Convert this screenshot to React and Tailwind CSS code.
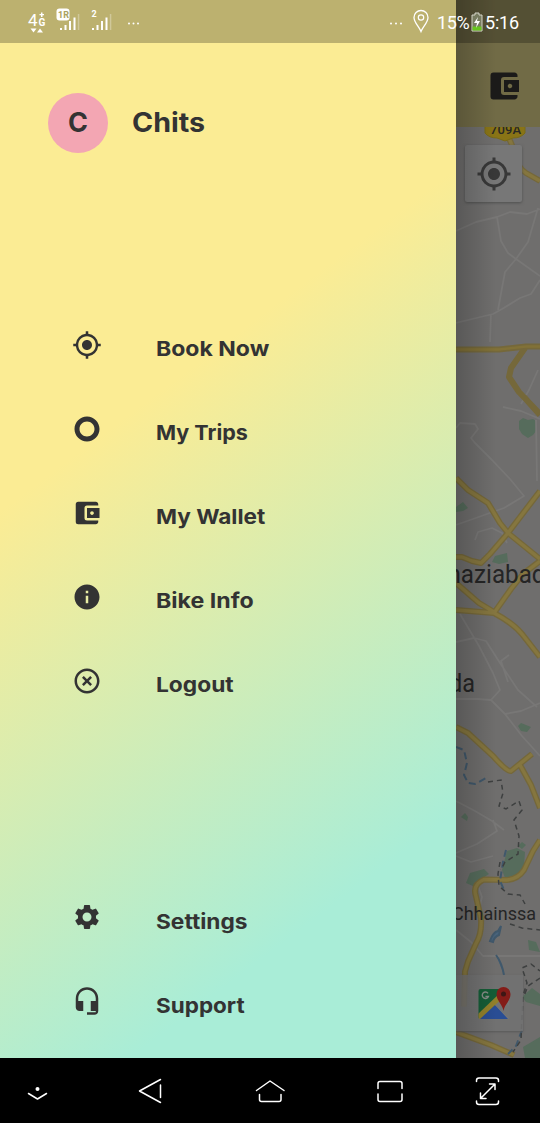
import {
  MdAccountBalanceWallet,
  MdHeadsetMic,
  MdHighlightOff,
  MdInfo,
  MdMyLocation,
  MdSettings,
  MdTripOrigin,
} from "react-icons/md";

const mainItems = [
  { Icon: MdMyLocation, label: "Book Now", fit: "pt-[7px] scale-x-[1.123]" },
  { Icon: MdTripOrigin, label: "My Trips", fit: "pt-[7px] scale-x-[1.05]" },
  { Icon: MdAccountBalanceWallet, label: "My Wallet", fit: "pt-[7px] scale-x-[1.1]" },
  { Icon: MdInfo, label: "Bike Info", fit: "pt-[7px] scale-x-[1.13]" },
  { Icon: MdHighlightOff, label: "Logout", fit: "pt-[7px] scale-x-[1.11]" },
];

const footerItems = [
  { Icon: MdSettings, label: "Settings", fit: "pt-[9px] scale-x-[1.107]" },
  { Icon: MdHeadsetMic, label: "Support", fit: "pt-[9px] scale-x-[1.097]" },
];

function MenuRow({ Icon, label, fit }) {
  return (
    <li className="flex h-[84px] items-center pl-[72px]">
      <Icon className="size-[30px] shrink-0" />
      <span className={`ml-[54px] origin-left text-[20.5px] leading-6 font-bold whitespace-nowrap ${fit}`}>
        {label}
      </span>
    </li>
  );
}

function Drawer() {
  return (
    <aside className="flex w-[456px] shrink-0 flex-col bg-[linear-gradient(143deg,#fbec94_36.5%,#a9edd7_82.5%)] font-['Inter',sans-serif] text-[#333333]">
      <header className="flex items-center pt-[93px] pl-12">
        <div className="flex size-[60px] items-center justify-center rounded-full bg-[#f3a6b3] text-[27px] font-bold">
          C
        </div>
        <h1 className="ml-6 origin-left scale-x-[1.06] text-[27px] leading-8 font-bold">Chits</h1>
      </header>
      <ul className="mt-[150px]">
        {mainItems.map((item) => (
          <MenuRow key={item.label} {...item} />
        ))}
      </ul>
      <ul className="mt-[152px]">
        {footerItems.map((item) => (
          <MenuRow key={item.label} {...item} />
        ))}
      </ul>
    </aside>
  );
}

function MapDrawing() {
  return (
    <svg viewBox="456 127 84 931" className="block h-[931px] w-[84px] font-['Roboto',sans-serif]" fill="none">
      <rect x="456" y="127" width="84" height="931" fill="#6f6e6d" />
      <g fill="#566c5c">
        <path d="M519 421l4-3 5 2 5-1 3 2v10l-3 4-5 3-6-4-3-5z" />
        <path d="M456 507l7-5 5 6-5 3-7 1zM495 556l12-3 1 9-9 2-7-2z" />
        <path d="M518 726l3-3 10 4-4 5-6-1z" />
        <path d="M502 870l5-19 10-3 8 4-1 14-7 10-12 2zM466 883l4-10 14-4 5 5-11 7-5 5zM518 846l4-4 4 3-4 4z" />
        <path d="M522 997l10-9 8 6v12l-14-4zM528 940l8 2 4 10-11-2z" />
        <path d="M461 817l4-4 3 4-1 4zM523 1047l17-10v21h-15z" />
      </g>
      <g stroke="#787776" strokeWidth="1.8" strokeLinejoin="round">
        <path d="M456 231l20-9 21-5 13-5 17 2 13-5M497 217l4 24 7 12 8 6 24 17M538 208l-10 34-12 17-11 13-3 16-4 22 M540 280l-9 14-11 4-18 11-9 5-37 9M491 314l-1 28M538 370l-9 20-8 14M503 407l18 4 19 8" />
        <path d="M456 428l4-5 15 1 3 5-7 9 4 5 17 17 18 19 14 17-20 12-31 11-17 6M536 420l1 61M475 540l3-8 14-4 10 5 5 10" />
        <path d="M460 614l19 32 14 27 7 17-9 10-14-1h-21M456 642l18-4 12 3 14 22 18 27 19 17M491 700l14 14 17 22 18 20M505 714l16-3 19-8M509 655l-8 6 7 21" />
        <path d="M456 801l19 10 17 10 12 9M493 820l4 11-20 13-21 9M456 856l15 6 22-6M456 930l15 12 12 14 57 0M478 914l4-17-5-14" />
      </g>
      <g stroke="#75683a" strokeWidth="6" strokeLinejoin="round">
        <path d="M508 137q5 8 6 17 4 14 12 19l14 8" />
        <path d="M456 349.500h43l27-3h14M525 348l-14 20-2 9 10 15 21 22M524 397l16 18" />
        <path d="M456 478l12 12 20 13 12 20 8 10 32 26M540 491l-32 42-18 21-9 9-9-2-10-4h-6M456 583l23 20 15 9M456 610l38 3 17-24 12-15 17-13M494 613q19 10 28 21l18 23" />
        <path d="M456 727l12 6 25 23q14 16 18 15l21-17M520 765l11 20 9 23" />
        <path d="M540 840l-7 11-9 19q-6 9-17 10l-23-.500q-12 5-8 17l5 22q1 15-5 25l-8 18-3 10-1 35M456 1032l35 13 23 10" />
      </g>
      <g stroke="#85763f" strokeWidth="3.4" strokeLinejoin="round">
        <path d="M508 137q5 8 6 17 4 14 12 19l14 8" />
        <path d="M456 478l12 12 20 13 12 20 8 10 32 26M540 491l-32 42-18 21-9 9-9-2-10-4h-6M456 583l23 20 15 9M456 610l38 3 17-24 12-15 17-13M494 613q19 10 28 21l18 23" />
        <path d="M456 727l12 6 25 23q14 16 18 15l21-17M520 765l11 20 9 23" />
        <path d="M540 840l-7 11-9 19q-6 9-17 10l-23-.500q-12 5-8 17l5 22q1 15-5 25l-8 18-3 10-1 35M456 1032l35 13 23 10" />
      </g>
      <path d="M456 349.500h43l27-3h14" stroke="#817138" strokeWidth="2.400" />
      <g stroke="#40586b">
        <path d="M490 941q3-9 8-10l3-5-2 9q-5 2-6 7zM496 955q6 8 8 20" fill="#48637b" strokeWidth="2" />
        <path d="M456 747l8 3 3 13-3 12 4 8 7 1 13-7M506 850l-3 12-3 19 5 11M522 1030l-6 16-8 8" strokeWidth="2" strokeDasharray="7 4" />
      </g>
      <g stroke="#3e4040" strokeWidth="1.500" strokeDasharray="5 4">
        <path d="M488 782l13-2 2 13-4 13 7 3 13-8 3 9-8 10 5 16-1 18-13 8-4 8M500 862l-2 12 1 12 9 8 12 1 5 9M510 924l12 4 18 2M522 1020l1-25 4-12-5-15 9-4 9 7M540 978l-12 8-4 10M522 1015l-1 25-8 12" />
      </g>
      <path d="M485 126h40v7q-4 5-12 5l-8 3-8-3q-8 0-12-5z" fill="#897416" stroke="#796a18" />
      <text x="490" y="134" textLength="31" fill="#292925" fontSize="13" fontWeight="500">709A</text>
      <g fill="#252525">
        <text x="447.500" y="583" textLength="98" lengthAdjust="spacingAndGlyphs" fontSize="25">haziabad</text>
        <text x="449" y="692" textLength="26" lengthAdjust="spacingAndGlyphs" fontSize="25">da</text>
        <text x="452" y="920" textLength="84" lengthAdjust="spacingAndGlyphs" fontSize="19">Chhainssa</text>
      </g>
    </svg>
  );
}

function GoogleMapsMark() {
  return (
    <svg viewBox="478 986 34 34" className="size-[34px]">
      <defs>
        <clipPath id="tile"><rect x="478.500" y="989" width="31" height="30" rx="2" /></clipPath>
      </defs>
      <g clipPath="url(#tile)">
        <path d="M478 988h32v32h-32z" fill="#777" />
        <path d="M478 988h28v9l-28 22z" fill="#155c36" />
        <path d="M478 1014l22-21 5 5-24 22h-3z" fill="#91802b" />
        <path d="M480 1019l15-14 13 14z" fill="#294d94" />
        <path d="M495 1005l8-7 7 10v11z" fill="#737373" />
      </g>
      <path d="M488 993.300a3.200 3.200 0 1 0 .4 3.200h-3" fill="none" stroke="#858c87" strokeWidth="1.400" />
      <path d="M503.500 1011c-1-7-7-10-7-17a7 7 0 0 1 14 0c0 7-6 10-7 17z" fill="#841c18" />
      <circle cx="503.500" cy="994" r="2.500" fill="#3d1715" />
    </svg>
  );
}

function DimmedPage() {
  return (
    <section className="relative flex w-[84px] flex-col overflow-hidden bg-[#6f6e6d]">
      <header className="flex h-[127px] shrink-0 items-end bg-[#716b46] pb-[23.500px] pl-[29.500px]">
        <MdAccountBalanceWallet className="size-9 shrink-0 text-[#1b1a19]" />
      </header>
      <MapDrawing />
      <div className="absolute top-[145px] left-[9px] flex size-[57px] items-center justify-center rounded-[2px] bg-[#777777] shadow-[0_1px_3px_#505050]">
        <MdMyLocation className="size-9 text-[#383838]" />
      </div>
      <div className="absolute top-[975px] left-0 flex h-[56px] w-[67px] items-center bg-[#727272]/85 pl-[22px] shadow-[0_1px_2px_#585858]">
        <GoogleMapsMark />
      </div>
      <div className="absolute inset-y-0 left-0 w-10 bg-gradient-to-r from-black/20 to-transparent" />
    </section>
  );
}

function SignalBars() {
  return (
    <>
      <path d="M0 17h2v2H0z M4.500 14h2v5h-2z M9 10h2v9H9z M13.500 6.500h2V19h-2z" />
      <path d="M17.800 3h1.500v16h-1.500z" opacity=".3" />
    </>
  );
}

function StatusBar() {
  return (
    <div className="absolute inset-x-0 top-0 flex h-[43px] items-center bg-black/25 font-['Roboto',sans-serif] text-white">
      <svg viewBox="0 0 150 43" className="h-[43px] w-[150px] shrink-0" fill="white">
        <text x="28" y="26" fontSize="17" textLength="9">4</text>
        <text x="38.500" y="26" fontSize="10" fontWeight="700">G</text>
        <path d="M41 12.500h1.500v1.500H44v1.300h-1.500V17H41v-1.700h-1.500V14H41zM30.500 28.500h6l-3 4zM37 32.500h6l-3-4z" />
        <rect x="56.500" y="8.500" width="13" height="12" rx="3" />
        <text x="58" y="18" fontSize="9" fontWeight="700" fill="#aaa160">1R</text>
        <g transform="translate(60 11)"><SignalBars /></g>
        <text x="91.500" y="17" fontSize="9" fontWeight="700">2</text>
        <g transform="translate(92 11)"><SignalBars /></g>
        <circle cx="129" cy="23.500" r="1" /><circle cx="133.500" cy="23.500" r="1" /><circle cx="138" cy="23.500" r="1" />
      </svg>
      <svg viewBox="385 0 50 43" className="ml-[235px] h-[43px] w-[50px] shrink-0">
        <g fill="white"><circle cx="391" cy="23.500" r="1" /><circle cx="396" cy="23.500" r="1" /><circle cx="401" cy="23.500" r="1" /></g>
        <path d="M421 31.500c-2-5-7-9-7-14a7 7 0 0 1 14 0c0 5-5 9-7 14z" fill="none" stroke="white" strokeWidth="1.300" />
        <circle cx="421" cy="17.500" r="2.700" fill="none" stroke="white" strokeWidth="1.200" />
      </svg>
      <span className="ml-[2px] w-[34px] pt-[2px] text-[18px] tracking-[-0.4px]">15%</span>
      <svg viewBox="0 0 12 20" className="h-5 w-3 shrink-0">
        <path d="M4 1h4v2h3v16H1V3h3z" fill="#777b60" stroke="#d5d5c8" strokeWidth="1" />
        <path d="M1.500 14.500h9v4h-9z" fill="#67c51d" />
        <path d="M7 5l-4 6h3l-1 5 4-7H6z" fill="white" />
      </svg>
      <span className="ml-[2px] pt-[2px] text-[18px] whitespace-nowrap tracking-[-0.2px]">5:16</span>
    </div>
  );
}

function NavigationBar() {
  return (
    <nav className="flex h-[65px] w-full bg-black">
      <svg viewBox="0 1058 540 65" className="h-[65px] w-[540px]" fill="none" stroke="white" strokeWidth="1.500" strokeLinecap="round" strokeLinejoin="round">
        <path d="M28.500 1093.500l9 5.500 9-5.500" />
        <circle cx="37.500" cy="1089" r="2" fill="white" stroke="none" />
        <path d="M160.500 1079.500l-21 11.500 21 11.500M160.500 1085v12.500" />
        <path d="M256.500 1090.500l13.500-9.500 14 9.500M259.500 1094.500v5q0 2 2 2h17.500q2 0 2-2v-5" />
        <path d="M378 1088.500v-5q0-2 2-2h20q2 0 2 2v5M378 1094v5.500q0 2 2 2h20q2 0 2-2v-5.500" />
        <path d="M476.500 1081.500v-1q0-2.500 2.500-2.500h17q2.500 0 2.500 2.500v1M476.500 1101v1q0 2.500 2.500 2.500h17q2.500 0 2.500-2.500v-1M480.500 1098.500l14.500-14.500M489.500 1084h5.500v5.500M480.500 1093v5.500h5.500" />
      </svg>
    </nav>
  );
}

export default function App() {
  return (
    <main className="relative flex h-[1123px] w-[540px] flex-col overflow-hidden bg-black">
      <div className="flex h-[1058px]">
        <Drawer />
        <DimmedPage />
      </div>
      <StatusBar />
      <NavigationBar />
    </main>
  );
}
